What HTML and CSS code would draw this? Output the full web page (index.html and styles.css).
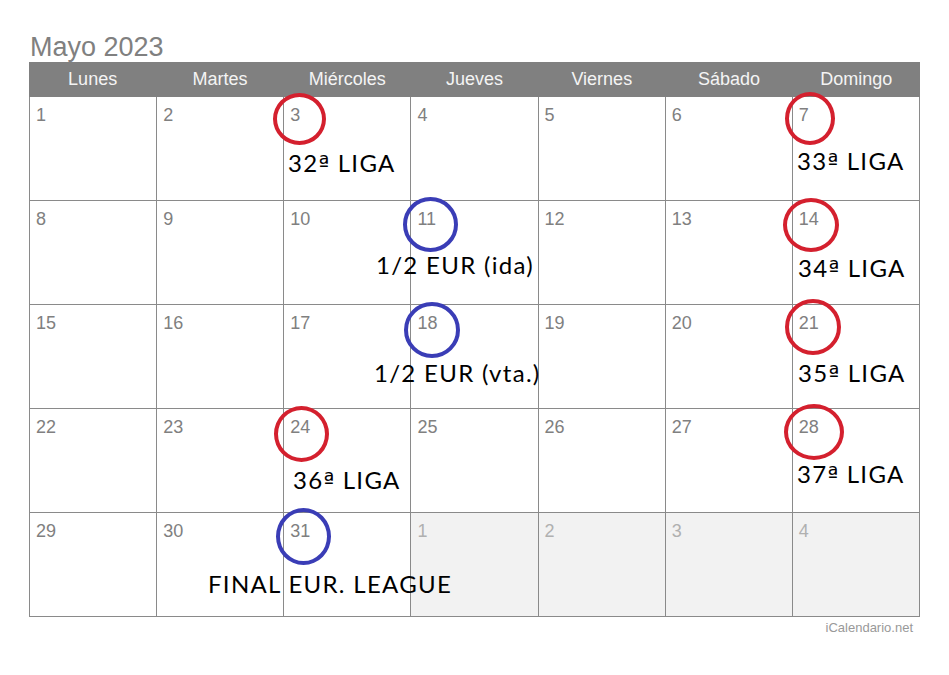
FILE: index.html
```html
<!DOCTYPE html>
<html lang="es">
<head>
<meta charset="utf-8">
<title>Mayo 2023</title>
<link rel="stylesheet" href="styles.css">
</head>
<body>
<div class="page">
  <h1 class="title">Mayo 2023</h1>
  <div class="cal">
    <div class="head">
      <div>Lunes</div><div>Martes</div><div>Miércoles</div><div>Jueves</div><div>Viernes</div><div>Sábado</div><div>Domingo</div>
    </div>
    <div class="grid">
      <div class="cell">1</div><div class="cell">2</div><div class="cell">3</div><div class="cell">4</div><div class="cell">5</div><div class="cell">6</div><div class="cell">7</div>
      <div class="cell">8</div><div class="cell">9</div><div class="cell">10</div><div class="cell">11</div><div class="cell">12</div><div class="cell">13</div><div class="cell">14</div>
      <div class="cell">15</div><div class="cell">16</div><div class="cell">17</div><div class="cell">18</div><div class="cell">19</div><div class="cell">20</div><div class="cell">21</div>
      <div class="cell">22</div><div class="cell">23</div><div class="cell">24</div><div class="cell">25</div><div class="cell">26</div><div class="cell">27</div><div class="cell">28</div>
      <div class="cell">29</div><div class="cell">30</div><div class="cell">31</div><div class="cell other">1</div><div class="cell other">2</div><div class="cell other">3</div><div class="cell other">4</div>
    </div>
  </div>
  <div class="credit">iCalendario.net</div>

  <div class="ring red r3"></div>
  <div class="ring red r7"></div>
  <div class="ring blue r11"></div>
  <div class="ring red r14"></div>
  <div class="ring blue r18"></div>
  <div class="ring red r21"></div>
  <div class="ring red r24"></div>
  <div class="ring red r28"></div>
  <div class="ring blue r31"></div>

  <div class="note n3">32<span class="ord">ª</span> LIGA</div>
  <div class="note n7">33<span class="ord">ª</span> LIGA</div>
  <div class="note n11">1/2 EUR (ida)</div>
  <div class="note n14">34<span class="ord">ª</span> LIGA</div>
  <div class="note n18">1/2 EUR (vta.)</div>
  <div class="note n21">35<span class="ord">ª</span> LIGA</div>
  <div class="note n24">36<span class="ord">ª</span> LIGA</div>
  <div class="note n28">37<span class="ord">ª</span> LIGA</div>
  <div class="note n31">FINAL EUR. LEAGUE</div>
</div>
</body>
</html>
```
FILE: styles.css
```css
html, body {
  margin: 0;
  padding: 0;
  background: #ffffff;
}
body {
  font-family: "Liberation Sans", Arial, sans-serif;
}
.page {
  position: relative;
  width: 949px;
  height: 675px;
  padding: 32px 0 0 29px;
  box-sizing: border-box;
}
.title {
  margin: 0;
  font-weight: normal;
  font-size: 27px;
  line-height: 30px;
  color: #808080;
  padding-left: 1px;
}
.cal {
  width: 891px;
}
.head {
  display: grid;
  grid-template-columns: repeat(7, 1fr);
  background: #808080;
  height: 35px;
  align-items: center;
}
.head div {
  text-align: center;
  color: #f4f4f4;
  font-size: 18px;
  line-height: 20px;
  padding-bottom: 1px;
}
.grid {
  display: grid;
  grid-template-columns: repeat(7, 1fr);
  border-left: 1px solid #8a8a8a;
}
.cell {
  height: 104px;
  box-sizing: border-box;
  border-right: 1px solid #8a8a8a;
  border-bottom: 1px solid #8a8a8a;
  padding: 8px 6px 0;
  font-size: 18px;
  line-height: 20px;
  color: #808080;
}
.cell.other {
  background: #f2f2f2;
  color: #b0b0b0;
}
.credit {
  width: 891px;
  text-align: right;
  font-size: 13px;
  line-height: 15px;
  color: #999999;
  margin-top: 3px;
  box-sizing: border-box;
  padding-right: 7px;
}

/* hand-drawn annotations laid over the calendar */
.ring {
  position: absolute;
  box-sizing: border-box;
  border-radius: 50%;
  border: 4px solid #d4202e;
}
.ring.blue { border-color: #3a3db6; }
.r3  { left: 273px; top: 93px;  width: 53px; height: 52px; }
.r7  { left: 785px; top: 92px;  width: 50px; height: 53px; }
.r11 { left: 403px; top: 197px; width: 55px; height: 55px; }
.r14 { left: 783px; top: 198px; width: 56px; height: 54px; }
.r18 { left: 404px; top: 302px; width: 56px; height: 56px; }
.r21 { left: 785px; top: 299px; width: 56px; height: 56px; }
.r24 { left: 274px; top: 406px; width: 55px; height: 56px; }
.r28 { left: 784px; top: 404px; width: 60px; height: 56px; }
.r31 { left: 276px; top: 508px; width: 55px; height: 57px; }

.note {
  position: absolute;
  font-family: Lato, "Open Sans", sans-serif;
  font-size: 24px;
  line-height: 24px;
  color: #000000;
  letter-spacing: 1.3px;
  white-space: nowrap;
}
.ord {
  font-family: "DejaVu Sans", sans-serif;
  font-size: 23px;
  letter-spacing: 1px;
}
.n3  { left: 288px; top: 151px; }
.n7  { left: 797px; top: 149px; }
.n11 { left: 376px; top: 253px; }
.n14 { left: 798px; top: 256px; }
.n18 { left: 374px; top: 361px; }
.n21 { left: 798px; top: 361px; }
.n24 { left: 293px; top: 468px; }
.n28 { left: 797px; top: 462px; }
.n31 { left: 208px; top: 572px; }
```
